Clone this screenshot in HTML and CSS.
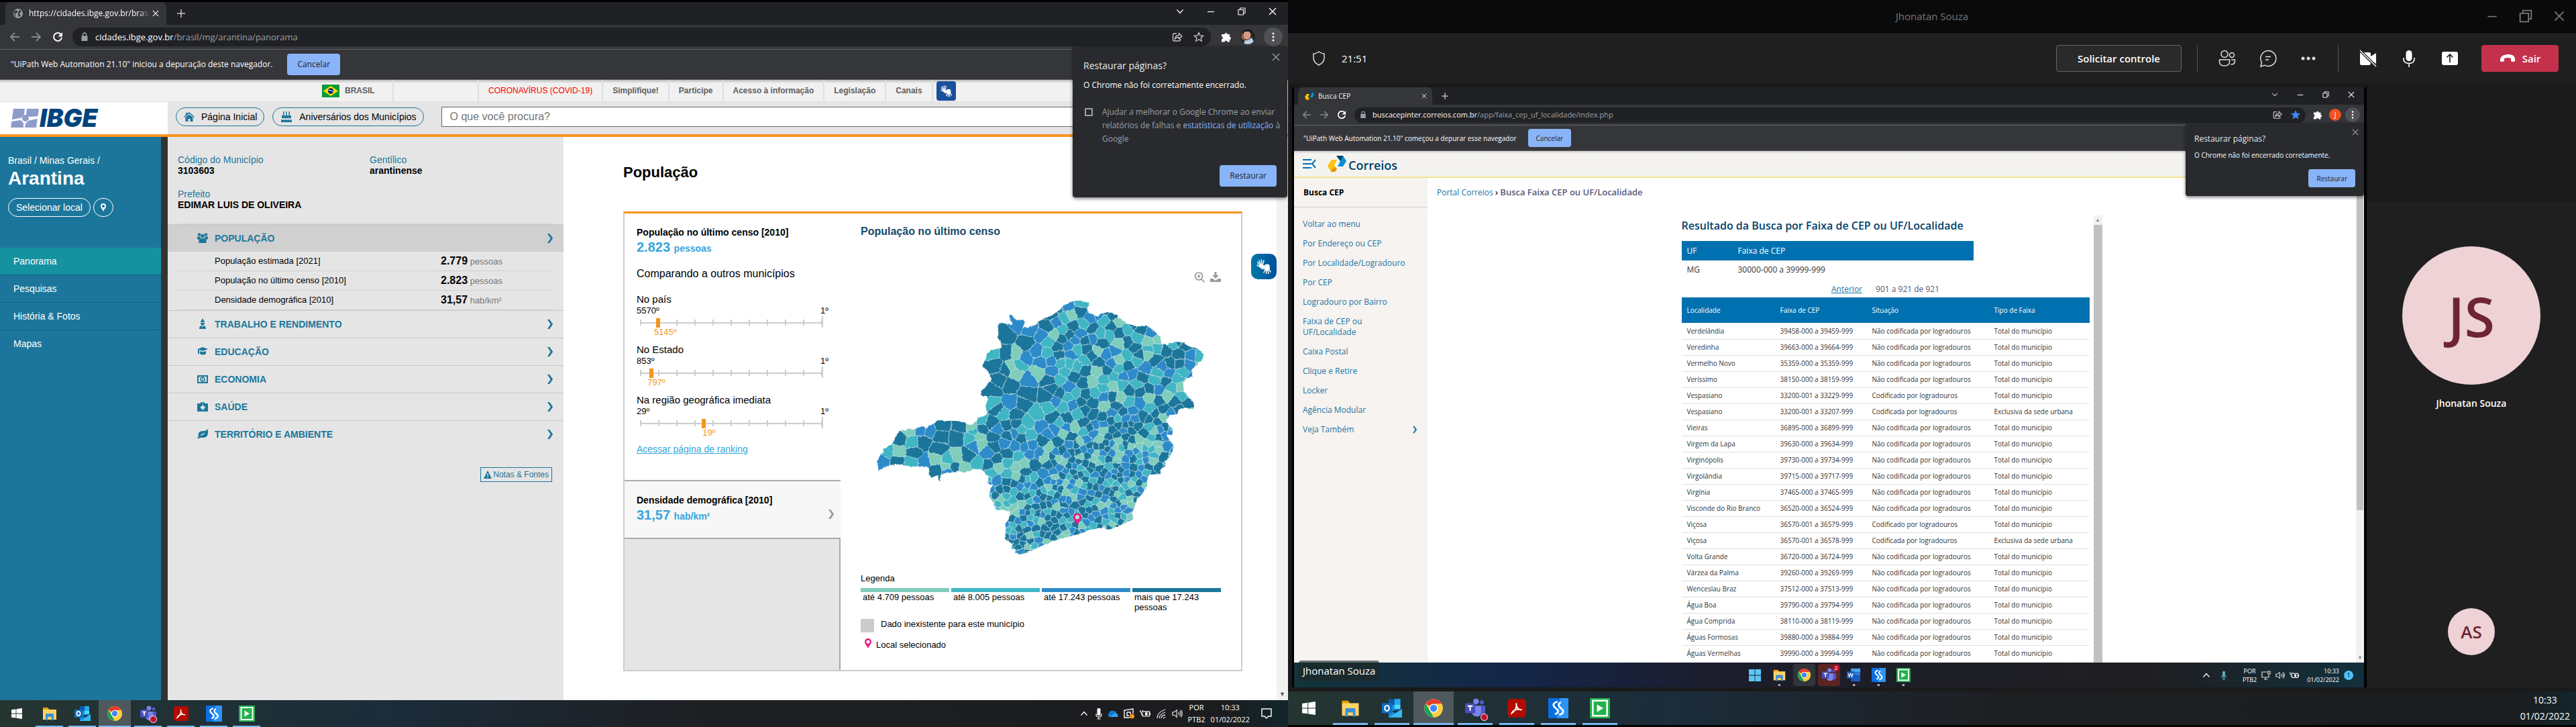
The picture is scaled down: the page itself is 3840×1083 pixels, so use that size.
FILE: index.html
```html
<!DOCTYPE html>
<html lang="pt-BR">
<head>
<meta charset="utf-8">
<title>Panorama - Arantina</title>
<link rel="stylesheet" href="styles.css">
</head>
<body>
<svg class="defs" aria-hidden="true">
  <symbol id="win" viewBox="0 0 16 16"><path fill="currentColor" d="M0 2.3 6.6 1.4V7.6H0zM7.4 1.3 16 0V7.6H7.4zM0 8.4H6.6V14.6L0 13.7zM7.4 8.4H16V16L7.4 14.7z"/></symbol>
  <symbol id="win11" viewBox="0 0 16 16"><path fill="#5cc8f5" d="M0 0H7.6V7.6H0zM8.4 0H16V7.6H8.4zM0 8.4H7.6V16H0zM8.4 8.4H16V16H8.4z"/></symbol>
  <symbol id="folder" viewBox="0 0 24 24"><path fill="#e8a000" d="M2 3h7l2 2v4H2z"/><path fill="#ffd466" d="M2 6h20v15H2z"/><path fill="#3a8fd8" d="M6 13q0-1 1-1h10q1 0 1 1v9h-3v-5H9v5H6z"/></symbol>
  <symbol id="outlook" viewBox="0 0 24 24"><path fill="#0a5aa8" d="M8 1h14v14H8z"/><path fill="#28a8ea" d="M15 1h7v7h-7z"/><path fill="#1490df" d="M8 8h7v7H8z"/><path fill="#50d9ff" d="M15 8h7v5h-7z"/><path fill="#1a86d8" d="M8 13l8 5 8-5v10H8z"/><path fill="#35b8f1" d="M8 23l16-10v10z"/><rect x="0" y="6" width="12" height="12" rx="1" fill="#0f6cbd"/><ellipse cx="6" cy="12" rx="2.6" ry="3.2" fill="none" stroke="#fff" stroke-width="1.7"/></symbol>
  <symbol id="chrome" viewBox="0 0 24 24"><circle cx="12" cy="12" r="11" fill="#ffcd40"/><path fill="#e33b2e" d="M12 12 2.5 6.500A11 11 0 0 1 21.500 6.500L12 7z"/><path fill="#1aa260" d="M2.500 6.500 7.600 15 12 23A11 11 0 0 1 2.500 6.500z"/><path fill="#ffcd40" d="M12 7h9.700A11 11 0 0 1 12 23l4.500-8z"/><circle cx="12" cy="12" r="5.300" fill="#fff"/><circle cx="12" cy="12" r="4.200" fill="#4285f4"/></symbol>
  <symbol id="teams" viewBox="0 0 24 24"><circle cx="13" cy="4" r="3.500" fill="#7b83eb"/><circle cx="20" cy="5" r="2.500" fill="#5059c9"/><path fill="#5059c9" d="M17 9h7v7q0 4-4 4h-3z"/><path fill="#7b83eb" d="M8 9h11v8q0 5-5 5t-6-5z"/><rect y="6" width="12" height="12" rx="1" fill="#464eb8"/><path d="M3 9.500h6M6 9.500V15" stroke="#fff" stroke-width="1.700"/></symbol>
  <symbol id="acrobat" viewBox="0 0 24 24"><rect x="1" y="1" width="22" height="22" rx="4" fill="#b30b00"/><path d="M6 18c1-3 6-6 12-4-4 0-7-3-6.500-8 1 5-2 10-5.500 12z" fill="none" stroke="#fff" stroke-width="1.500"/></symbol>
  <symbol id="sapp" viewBox="0 0 24 24"><path fill="#0a6ee0" d="M0 0h24v24H0z"/><path fill="#2b95f5" d="M14 0h10v24H10z"/><path d="M11 4C5 6 5 9 9 12s3 6-1 7M15 5c-3 1-4 4 0 7s4 6-2 8" fill="none" stroke="#fff" stroke-width="2.200"/></symbol>
  <symbol id="gapp" viewBox="0 0 24 24"><path fill="#22b14c" d="M0 0h24v24H0z"/><path d="M3.500 3h17v18h-17z" fill="none" stroke="#fff" stroke-width="2"/><path fill="#fff" d="M8.500 7.500 16 12l-7.500 4.500z"/></symbol>
  <symbol id="word" viewBox="0 0 24 24"><path fill="#41a5ee" d="M7 1h16v6H7z"/><path fill="#2b7cd3" d="M7 7h16v6H7z"/><path fill="#185abd" d="M7 13h16v10H7z"/><rect y="6" width="13" height="12" fill="#185abd"/><path d="M2.500 9l1.700 6L6.500 9.500 8.800 15l1.700-6" fill="none" stroke="#fff" stroke-width="1.400"/></symbol>
  <symbol id="close" viewBox="0 0 12 12"><path d="M1 1l10 10M11 1 1 11" fill="none" stroke="currentColor" stroke-width="1.300"/></symbol>
  <symbol id="minus" viewBox="0 0 12 12"><path d="M1 6.500h10" stroke="currentColor" stroke-width="1.200"/></symbol>
  <symbol id="restore" viewBox="0 0 12 12"><path d="M1 3.500h7.500V11H1zM3.500 3.500V1H11v7.500H8.500" fill="none" stroke="currentColor" stroke-width="1.100"/></symbol>
  <symbol id="down" viewBox="0 0 12 12"><path d="M1.500 3.500 6 8.500l4.500-5" fill="none" stroke="currentColor" stroke-width="1.200"/></symbol>
  <symbol id="up" viewBox="0 0 12 12"><path d="M1.500 8.500 6 3.500l4.500 5" fill="none" stroke="currentColor" stroke-width="1.300"/></symbol>
  <symbol id="plus" viewBox="0 0 12 12"><path d="M6 0v12M0 6h12" stroke="currentColor" stroke-width="1.500"/></symbol>
  <symbol id="back" viewBox="0 0 16 16"><path d="M15 8H2M8 2 2 8l6 6" fill="none" stroke="currentColor" stroke-width="1.800"/></symbol>
  <symbol id="fwd" viewBox="0 0 16 16"><path d="M1 8h13M8 2l6 6-6 6" fill="none" stroke="currentColor" stroke-width="1.800"/></symbol>
  <symbol id="reload" viewBox="0 0 16 16"><path d="M13 4.500A6 6 0 1 0 14 9" fill="none" stroke="currentColor" stroke-width="2"/><path fill="currentColor" d="M15 1v6.500H8.500z"/></symbol>
  <symbol id="lock" viewBox="0 0 12 14"><path fill="currentColor" d="M1.500 5.500h9V13h-9z"/><path d="M3.500 6V3.500a2.500 2.500 0 0 1 5 0V6" fill="none" stroke="currentColor" stroke-width="1.400"/></symbol>
  <symbol id="export" viewBox="0 0 16 16"><path d="M7 3H3q-1.500 0-1.500 1.500v8Q1.500 14 3 14h8q1.500 0 1.500-1.500V11M4.500 11c.5-4 3-5.500 6-5.500V2.500L15 7l-4.500 4V8.500c-3 0-4.500.5-6 2.500z" fill="none" stroke="currentColor" stroke-width="1.300"/></symbol>
  <symbol id="star" viewBox="0 0 16 16"><path d="M8 1.500l1.900 4.400 4.800.4-3.600 3.200 1.100 4.700L8 11.700l-4.200 2.500 1.100-4.700L1.300 6.300l4.800-.4z" stroke="currentColor" stroke-width="1.300"/></symbol>
  <symbol id="puzzle" viewBox="0 0 16 16"><path fill="currentColor" d="M1 4h4.500a2 2 0 1 1 4 0H13v4a2 2 0 1 1 0 4v3.500H9.500a2 2 0 1 0-4 0H1V11.500a2 2 0 1 0 0-4z"/></symbol>
  <symbol id="dots" viewBox="0 0 16 16"><g fill="#fff"><circle cx="8" cy="3" r="1.500"/><circle cx="8" cy="8" r="1.500"/><circle cx="8" cy="13" r="1.500"/></g></symbol>
  <symbol id="globe" viewBox="0 0 16 16"><circle cx="8" cy="8" r="7" fill="#9aa0a6"/><path fill="#35363a" d="M3 4c3-1 5 0 4 2s-1 1-3 2 1 3 1 5C3 12 1.500 9 2 6zM9 3c3 0 4 2 4 3-2 0-3 1-3 3l2 1c-1 2-2 3-4 3 1-3-1-4 0-6s2-2 1-4z"/></symbol>
  <symbol id="chev" viewBox="0 0 12 16"><path d="M2 1h3.200l5 7-5 7H2l4.700-7z" fill="currentColor"/></symbol>
  <symbol id="pin" viewBox="0 0 12 18"><path fill="currentColor" fill-rule="evenodd" d="M6 0a6 6 0 0 1 6 6c0 3.500-3.500 6.500-6 12C3.500 12.500 0 9.500 0 6a6 6 0 0 1 6-6zm0 3a3 3 0 1 0 0 6.200A3 3 0 0 0 6 3z"/></symbol>
  <symbol id="hands" viewBox="0 0 24 24"><g stroke="currentColor" stroke-width="1.500" stroke-linecap="round" fill="none"><path d="M6 10 2.500 5.500M7 9 5 3M8.500 9 8.500 2M10 10l2-7M6 12.500 2 10"/><path d="M14 17l-2 4M16 18l-.500 4.500M18 18l1 4.500M19.500 16l2.500 4M13 14l-3 2"/></g><path fill="currentColor" d="M5.500 9.500 10.500 9l2 2-1 4-3 .500q-3-2-3-6zM12 13q0-4 4-4.500l4 .500q1.500 4 .500 8l-5 2-3-3z"/></symbol>
  <symbol id="speaker" viewBox="0 0 18 16"><path d="M1 5.500h3L8 2v12l-4-3.500H1zM11 5.500q2 2.500 0 5M13 3.500q4 4.500 0 9M15.200 2q4 6 0 12" fill="none" stroke="currentColor" stroke-width="1.200"/></symbol>
  <symbol id="tmic" viewBox="0 0 10 18"><rect x="2.500" y="1" width="5" height="11" rx="2" fill="currentColor"/><path d="M1 9v2q0 3 4 3t4-3V9M5 14v3M2.500 17h5" fill="none" stroke="currentColor" stroke-width="1.200"/></symbol>
  <symbol id="battery" viewBox="0 0 18 14"><path d="M6 3.500h10v8H5V7M16 6h1.500v3H16M1 1v3.500h4V1M3 4.500V10" fill="none" stroke="currentColor" stroke-width="1.300"/><path fill="currentColor" d="M9 5h4v5H9z"/></symbol>
  <symbol id="correios" viewBox="0 0 28 24"><path fill="#ffc20e" d="M6 6h8l-4 8 4 6-3 4H5L0 15z"/><path fill="#d99a00" d="M5 24 9 17l5 2-3 5z"/><path fill="#0091d0" d="M15 0h8l5 8-5 8h-8l4-8z"/><path fill="#00416b" d="M13 0h10l-4 8z"/></symbol>
</svg>

<div class="desktop">
<!-- Monitor 1: navegador com o portal IBGE Cidades -->
<section class="screen screen-a">
  <div class="browser">
    <div class="tabs">
      <div class="tab"><svg class="i16"><use href="#globe"/></svg><span class="tab-title">https://cidades.ibge.gov.br/brasil</span><svg class="i10"><use href="#close"/></svg></div>
      <button class="icon-btn new-tab" aria-label="Nova guia"><svg class="i12"><use href="#plus"/></svg></button>
      <div class="win-ctl"><svg class="i12"><use href="#down"/></svg><svg class="i12"><use href="#minus"/></svg><svg class="i12"><use href="#restore"/></svg><svg class="i12"><use href="#close"/></svg></div>
    </div>
    <div class="toolbar">
      <div class="nav-ico"><svg class="i16 dim"><use href="#back"/></svg><svg class="i16 dim"><use href="#fwd"/></svg><svg class="i16"><use href="#reload"/></svg></div>
      <div class="omnibox"><svg class="lock"><use href="#lock"/></svg><span class="url"><b>cidades.ibge.gov.br</b>/brasil/mg/arantina/panorama</span><svg class="i16"><use href="#export"/></svg><svg class="i16 hollow"><use href="#star"/></svg></div>
      <svg class="i16 puzzle"><use href="#puzzle"/></svg>
      <svg class="avatar" viewBox="0 0 22 22"><defs><clipPath id="av"><circle cx="11" cy="11" r="11"/></clipPath></defs><g clip-path="url(#av)"><path fill="#222" d="M0 0h22v22H0z"/><path fill="#8a5a48" d="M2 5l5 3v9l-6-4z"/><ellipse cx="10" cy="8" rx="5.500" ry="7" fill="#d49b82"/><path fill="#1b1512" d="M3 0h14l-1 6-3-3H6L4 8z"/><path fill="#b9cfe0" d="M5 22q1-8 6-6l6-4 5 10z"/></g></svg>
      <span class="more"><svg class="i16"><use href="#dots"/></svg></span>
    </div>
    <div class="infobar"><span>"UiPath Web Automation 21.10" iniciou a depuração deste navegador.</span><button class="blue-btn">Cancelar</button></div>
  </div>

  <div class="ibge">
    <div class="govbar">
      <a class="gov-brasil" href="#"><svg class="flag" viewBox="0 0 26 19"><path fill="#009b3a" d="M0 0h26v19H0z"/><path fill="#fedf00" d="M13 2l11 7.500L13 17 2 9.500z"/><circle cx="13" cy="9.500" r="4.200" fill="#002776"/><path d="M9.500 8.500q4-1 7 2" stroke="#fff" fill="none"/></svg>BRASIL</a>
      <span class="gov-gap"></span>
      <a class="gov-red" href="#">CORONAVÍRUS (COVID-19)</a><a href="#">Simplifique!</a><a href="#">Participe</a><a href="#">Acesso à informação</a><a href="#">Legislação</a><a href="#">Canais</a>
      <span class="vl-small"><svg><use href="#hands"/></svg></span>
    </div>
    <header class="ibge-head">
      <div class="logo-box"><svg class="ibge-mark" viewBox="0 0 42 28"><path fill="#8e9cc9" d="M4 0h38l-4 28H0z"/><path fill="#fff" d="M24 0l-1 8q1 3 6 4l12-1-1 4-11 2q-6 2-7 6l-1 5h-2v-6q-1-4-5-5L1 19l1-3 12-2q5-2 6-6l1-8z"/><circle cx="22" cy="14" r="5" fill="#8e9cc9"/></svg><span class="ibge-word">IBGE</span></div>
      <div class="head-tools">
        <a class="pill" href="#"><svg class="i16"><path fill="currentColor" d="M8 1l8 7-1 1-7-6-7 6-1-1 3-3V2h2v1zM2.500 9L8 4.500 13.500 9v6h-4v-4h-3v4h-4z"/></svg>Página Inicial</a>
        <a class="pill" href="#"><svg class="cake" viewBox="0 0 18 16"><path fill="currentColor" d="M4 0h1.500v6H4zM8.200 0h1.500v6H8.200zM12.500 0H14v6h-1.500zM2 6h14v3.500q-2 2-3.500 0-1.700 2-3.500 0-1.700 2-3.500 0-1.500 2-3.500 0zM1 12q1.500 1 3 0 2 1.500 4 0 2 1.500 4 0 2 1.500 5 0v4H1z"/></svg>Aniversários dos Municípios</a>
        <input class="search" type="text" placeholder="O que você procura?" aria-label="Busca">
      </div>
    </header>
    <div class="ibge-body">
      <aside class="side">
        <p class="crumb">Brasil / Minas Gerais /</p>
        <h1>Arantina</h1>
        <div class="place-btns"><button>Selecionar local</button><button class="round" aria-label="Localização"><svg viewBox="0 0 12 18"><use href="#pin"/></svg></button></div>
        <nav><a class="on" href="#">Panorama</a><a href="#">Pesquisas</a><a href="#">História &amp; Fotos</a><a href="#">Mapas</a></nav>
      </aside>
      <section class="facts">
        <dl class="ids">
          <div><dt>Código do Município</dt><dd>3103603</dd></div><div><dt>Gentílico</dt><dd>arantinense</dd></div>
          <div><dt>Prefeito</dt><dd>EDIMAR LUIS DE OLIVEIRA</dd></div>
        </dl>
        <button class="theme open"><svg class="i16"><g fill="currentColor"><circle cx="3" cy="2.500" r="2.200"/><circle cx="13" cy="2.500" r="2.200"/><circle cx="8" cy="4.500" r="2.800"/><path d="M0 5.500h4.500L5 8 2 9.500H0zM16 5.500h-4.500L11 8l3 1.500h2zM2.500 9q5.500-2 11 0v6h-11z"/></g></svg><span>POPULAÇÃO</span><svg class="chev"><use href="#chev"/></svg></button>
        <ul class="vals">
          <li><span>População estimada [2021]</span><span><b>2.779</b> pessoas</span></li>
          <li><span>População no último censo [2010]</span><span><b>2.823</b> pessoas</span></li>
          <li><span>Densidade demográfica [2010]</span><span><b>31,57</b> hab/km²</span></li>
        </ul>
        <button class="theme"><svg class="i16"><path fill="currentColor" d="M7 0h2v2q2 0 2 3H5q0-3 2-3zM5 6h6q0 3-3 4-3-1-3-4zM3 15q0-4 3-5l2 2 2-2q3 1 3 5z"/></svg><span>TRABALHO E RENDIMENTO</span><svg class="chev"><use href="#chev"/></svg></button>
        <button class="theme"><svg class="i16"><path fill="currentColor" d="M8 1l8 3-8 3-5-2v6H1V4zM4 7l4 1.500L13 7v4q-5 3-9 0z"/></svg><span>EDUCAÇÃO</span><svg class="chev"><use href="#chev"/></svg></button>
        <button class="theme"><svg class="i16"><path d="M1 3h14v10H1z" fill="none" stroke="currentColor" stroke-width="2"/><circle cx="8" cy="8" r="3" fill="none" stroke="currentColor" stroke-width="1.500"/><path d="M8 6v4M2 4h2M12 12h2" stroke="currentColor"/></svg><span>ECONOMIA</span><svg class="chev"><use href="#chev"/></svg></button>
        <button class="theme"><svg class="i16"><path fill="currentColor" fill-rule="evenodd" d="M5 3V1h6v2h5v12H0V3zm1.500 0h3v-.700h-3zM7 5.500v2H5v3h2v2h2.500v-2h2v-3h-2v-2z"/></svg><span>SAÚDE</span><svg class="chev"><use href="#chev"/></svg></button>
        <button class="theme"><svg class="i16"><path fill="currentColor" fill-rule="evenodd" d="M16 0v5q0 8-7 8H4l-3 1.500L0 14l2-3Q0 3 9 3q5 0 7-3zM4 10q5-1 8-4-4 0-8 4z"/></svg><span>TERRITÓRIO E AMBIENTE</span><svg class="chev"><use href="#chev"/></svg></button>
        <button class="notes"><svg class="i12" viewBox="0 0 12 12"><path fill="currentColor" fill-rule="evenodd" d="M6 0l6 12H0zM5.300 4v4h1.400V4zm0 5v1.500h1.400V9z"/></svg>Notas &amp; Fontes</button>
      </section>
      <main class="pop">
        <h2>População</h2>
        <div class="card">
          <div class="card-l">
            <section class="stat">
              <h3>População no último censo [2010]</h3>
              <p class="big">2.823 <small>pessoas</small></p>
              <h4>Comparando a outros municípios</h4>
              <div class="rank"><p>No país</p><div class="ends"><span>5570º</span><span>1º</span></div><div class="track"><i class="mark" style="left:9%"></i></div><div class="pos"><span style="left:12%">5145º</span></div></div>
              <div class="rank"><p>No Estado</p><div class="ends"><span>853º</span><span>1º</span></div><div class="track"><i class="mark" style="left:5%"></i></div><div class="pos"><span style="left:8%">797º</span></div></div>
              <div class="rank"><p>Na região geográfica imediata</p><div class="ends"><span>29º</span><span>1º</span></div><div class="track"><i class="mark" style="left:34%"></i></div><div class="pos"><span style="left:36%">19º</span></div></div>
              <a class="ranking" href="#">Acessar página de ranking</a>
            </section>
            <section class="stat alt">
              <div><h3>Densidade demográfica [2010]</h3><p class="big">31,57 <small>hab/km²</small></p></div>
              <svg class="chev"><use href="#chev"/></svg>
            </section>
            <div class="filler"></div>
          </div>
          <div class="card-r">
            <h3>População no último censo</h3>
            <div class="map-tools"><svg class="i16"><path d="M7 1a5.500 5.500 0 1 0 .1 0M11 11l4.500 4.500M7 4v5M4.500 6.500h5" fill="none" stroke="currentColor" stroke-width="1.700"/></svg><svg class="i16"><path fill="currentColor" d="M6.500 0h3v5H13l-5 5-5-5h3.500zM0 10h4l4 3 4-3h4v5H0z"/></svg></div>
            <svg class="map" viewBox="8 3 1560 1287" preserveAspectRatio="none" role="img" aria-label="Mapa de Minas Gerais">
              <defs>
                <filter id="rough" x="0" y="0" width="1" height="1"><feTurbulence type="fractalNoise" baseFrequency=".09" numOctaves="2" seed="4"/><feDisplacementMap in="SourceGraphic" scale="10" xChannelSelector="R" yChannelSelector="G"/></filter>
                <clipPath id="mg"><path d="M80 800 95 768 108 765 105 745 125 735 145 725 160 690 178 665 205 662 215 655 235 660 250 655 275 645 290 655 310 640 330 630 350 616 370 622 400 620 430 622 465 632 480 640 510 625 515 608 540 600 555 590 552 570 548 550 560 525 555 510 530 508 527 490 545 475 560 455 575 435 565 410 555 393 535 378 545 350 555 320 575 305 605 298 618 290 612 265 600 250 605 225 602 190 620 183 650 190 665 192 655 165 650 148 662 148 675 165 695 175 710 168 720 180 710 205 735 203 765 192 775 178 805 162 835 150 865 128 885 108 910 92 940 83 970 86 998 94 988 125 1000 140 1035 155 1045 143 1075 136 1110 145 1135 165 1160 185 1200 198 1250 198 1275 215 1305 245 1310 275 1335 280 1365 268 1400 270 1430 288 1465 298 1495 322 1485 350 1460 375 1440 392 1445 425 1420 430 1405 450 1407 490 1425 510 1450 540 1452 558 1445 570 1415 562 1385 570 1378 592 1345 595 1330 620 1345 640 1360 660 1358 682 1330 685 1345 705 1360 725 1360 755 1345 780 1330 800 1325 825 1310 835 1305 860 1258 860 1250 880 1248 915 1230 945 1205 970 1195 1000 1185 1030 1188 1060 1150 1080 1085 1108 1060 1098 1000 1108 950 1128 900 1140 840 1160 790 1180 750 1200 705 1217 675 1213 680 1195 660 1190 665 1170 632 1150 635 1120 635 1075 650 1060 655 1030 625 1018 595 1020 580 985 565 955 570 925 580 910 558 900 560 870 540 845 520 835 500 835 480 845 460 852 430 845 400 852 370 855 355 860 353 890 345 888 343 862 315 875 303 855 305 830 270 825 230 825 195 820 170 815 130 820 85 843z"/></clipPath>
              </defs>
              <g filter="url(#rough)"><g id="cells" clip-path="url(#mg)"></g></g>
              <svg x="928" y="1033" width="36" height="54" viewBox="0 0 12 18" class="pink"><circle cx="6" cy="6" r="3.500" fill="#b5dcec"/><use href="#pin"/></svg>
            </svg>
            <div class="legend">
              <p>Legenda</p>
              <ul class="ramp"><li class="c0">até 4.709 pessoas</li><li class="c1">até 8.005 pessoas</li><li class="c2">até 17.243 pessoas</li><li class="c3">mais que 17.243 pessoas</li></ul>
              <p class="nodata"><i></i>Dado inexistente para este município</p>
              <p class="sel"><svg class="pink"><use href="#pin"/></svg>Local selecionado</p>
            </div>
          </div>
        </div>
        <button class="vl-float" aria-label="Libras"><svg><use href="#hands"/></svg></button>
      </main>
      <div class="vscroll"><span>▼</span></div>
    </div>
  </div>

  <footer class="task">
    <span class="tk nolink"><svg class="wi"><use href="#win"/></svg></span><span class="tk"><svg><use href="#folder"/></svg></span><span class="tk"><svg><use href="#outlook"/></svg></span><span class="tk active"><svg><use href="#chrome"/></svg></span><span class="tk rec"><svg><use href="#teams"/></svg></span><span class="tk"><svg><use href="#acrobat"/></svg></span><span class="tk"><svg><use href="#sapp"/></svg></span><span class="tk"><svg><use href="#gapp"/></svg></span>
    <div class="tray">
      <svg class="i12"><use href="#up"/></svg><svg class="mic"><use href="#tmic"/></svg>
      <svg class="i16"><path fill="#0f78d4" d="M2 13q-3-3 0-5 1-5 6-4 4-1 5 4 4 1 2 5z"/><path fill="#32a5ee" d="M3 13l8-6q5 0 4 6z"/></svg>
      <svg class="i16"><path d="M9 14H1V3l13-2v7M5 6v5h3M5 6h5v3" fill="none" stroke="#fff" stroke-width="1.400"/><circle cx="12.500" cy="12" r="3.500" fill="#f7941d"/></svg>
      <svg class="i16"><use href="#battery"/></svg>
      <svg class="i16"><path d="M2 15Q2 6 14 2M5 15q0-6 9-9M8 15q0-4 6-5M11 15l3-2" fill="none" stroke="#ddd" stroke-width="1.300"/></svg>
      <svg class="i16"><use href="#speaker"/></svg>
      <span class="two">POR<br>PTB2</span><span class="two date">10:33<br>01/02/2022</span>
      <svg class="i16 act"><path d="M1 1h14v11h-4l-3 3-3-3H1z" fill="none" stroke="#fff" stroke-width="1.400"/></svg>
    </div>
  </footer>

  <div class="restore-pop pop-a" role="dialog" aria-label="Restaurar páginas?">
    <button class="icon-btn x" aria-label="Fechar"><svg class="i12"><use href="#close"/></svg></button>
    <h5>Restaurar páginas?</h5>
    <p>O Chrome não foi corretamente encerrado.</p>
    <label><input type="checkbox"><span>Ajudar a melhorar o Google Chrome ao enviar relatórios de falhas e <a href="#">estatísticas de utilização</a> à Google</span></label>
    <button class="blue-btn">Restaurar</button>
  </div>
</section>

<!-- Monitor 2: chamada do Teams com tela compartilhada -->
<section class="screen screen-b">
  <div class="t-title"><span>Jhonatan Souza</span><div><svg class="i16"><use href="#minus"/></svg><svg class="i20"><use href="#restore"/></svg><svg class="i16"><use href="#close"/></svg></div></div>
  <div class="t-bar">
    <svg class="i24 thin"><path d="M12 2q4 3 8 3v6q0 7-8 11-8-4-8-11V5q4 0 8-3z"/></svg><span class="time">21:51</span>
    <button class="ask">Solicitar controle</button><i class="sep"></i>
    <div class="t-icons g1">
      <svg class="i26 thin"><circle cx="9" cy="6.500" r="5"/><circle cx="20" cy="8" r="3.500"/><path d="M1.500 15h15v3q0 6-7.500 6t-7.500-6zM19 15h5.500v2q0 5-6 5"/></svg>
      <svg class="i26 thin"><path d="M2 25l1.500-6a11.500 11.500 0 1 1 4.500 4.200zM9 10.500h8M9 15h5"/></svg>
      <svg class="i26"><g fill="#ddd"><circle cx="4" cy="13" r="2.500"/><circle cx="12" cy="13" r="2.500"/><circle cx="20" cy="13" r="2.500"/></g></svg>
    </div><i class="sep"></i>
    <div class="t-icons g2">
      <svg class="i26"><path fill="#fff" d="M1 6q0-2 2-2h12q2 0 2 2v4l8-5v16l-8-5v4q0 3-3 3H3q-2 0-2-2z"/><path d="M1 1l24 24" stroke="#1f1f1f" stroke-width="4"/><path d="M1 1l24 24" stroke="#fff" stroke-width="1.400"/></svg>
      <svg class="i26"><rect x="8.500" y="1" width="9" height="16" rx="4.500" fill="#fff"/><path d="M5 12v2q0 6.500 8 6.500t8-6.500v-2M13 20.500V26" fill="none" stroke="#fff" stroke-width="1.600"/></svg>
      <svg class="i26"><rect x="1" y="3" width="24" height="20" rx="3" fill="#fff"/><path d="M13 19V7M8.500 11.500 13 7l4.500 4.500" fill="none" stroke="#1f1f1f" stroke-width="1.700"/></svg>
    </div>
    <button class="leave"><svg class="i24"><path fill="#fff" d="M1 16Q0 7 12 6t11 10q-1 2-6 0v-4q-5-2-10 0v4q-5 2-6 0z"/></svg>Sair</button>
  </div>

  <div class="stage">
    <div class="shared">
      <div class="browser mini">
        <div class="tabs">
          <div class="tab"><svg class="i14"><use href="#correios"/></svg><span class="tab-title">Busca CEP</span><svg class="i8"><use href="#close"/></svg></div>
          <button class="icon-btn new-tab" aria-label="Nova guia"><svg class="i10"><use href="#plus"/></svg></button>
          <div class="win-ctl"><svg class="i10"><use href="#down"/></svg><svg class="i10"><use href="#minus"/></svg><svg class="i10"><use href="#restore"/></svg><svg class="i10"><use href="#close"/></svg></div>
        </div>
        <div class="toolbar">
          <div class="nav-ico"><svg class="i14 dim"><use href="#back"/></svg><svg class="i14 dim"><use href="#fwd"/></svg><svg class="i14"><use href="#reload"/></svg></div>
          <div class="omnibox"><svg class="lock"><use href="#lock"/></svg><span class="url"><b>buscacepinter.correios.com.br</b>/app/faixa_cep_uf_localidade/index.php</span><svg class="i14"><use href="#export"/></svg><svg class="i14 starred"><use href="#star"/></svg></div>
          <svg class="i14 puzzle"><use href="#puzzle"/></svg><span class="initial">J</span><span class="more"><svg class="i14"><use href="#dots"/></svg></span>
        </div>
        <div class="infobar"><span>"UiPath Web Automation 21.10" começou a depurar esse navegador</span><button class="blue-btn">Cancelar</button></div>
      </div>
      <header class="cor-head"><svg class="i20 burger"><path d="M0 4h13M0 10h13M0 16h13M19 4l-5 6 5 6" fill="none" stroke="#0071ad" stroke-width="2"/></svg><svg class="cor-mark"><use href="#correios"/></svg><span>Correios</span></header>
      <div class="cor-body">
        <aside class="cor-side"><h6>Busca CEP</h6>
          <nav><a href="#">Voltar ao menu</a><a href="#">Por Endereço ou CEP</a><a href="#">Por Localidade/Logradouro</a><a href="#">Por CEP</a><a href="#">Logradouro por Bairro</a><a href="#">Faixa de CEP ou<br>UF/Localidade</a><a href="#">Caixa Postal</a><a href="#">Clique e Retire</a><a href="#">Locker</a><a href="#">Agência Modular</a><a class="more-link" href="#">Veja Também<svg class="i12"><use href="#chev"/></svg></a></nav>
        </aside>
        <main class="cor-main">
          <p class="trail"><a href="#">Portal Correios</a> <b class="gt">›</b> <b>Busca Faixa CEP ou UF/Localidade</b></p>
          <div class="frame">
            <div class="result">
              <h3>Resultado da Busca por Faixa de CEP ou UF/Localidade</h3>
              <table class="uf"><thead><tr><th>UF</th><th>Faixa de CEP</th></tr></thead><tbody><tr><td>MG</td><td>30000-000 a 39999-999</td></tr></tbody></table>
              <p class="pager"><a href="#">Anterior</a><span>901 a 921 de 921</span></p>
              <table class="list">
                <thead><tr><th>Localidade</th><th>Faixa de CEP</th><th>Situação</th><th>Tipo de Faixa</th></tr></thead>
                <tbody>
                <tr><td>Verdelândia</td><td>39458-000 a 39459-999</td><td>Não codificada por logradouros</td><td>Total do município</td></tr>
                <tr><td>Veredinha</td><td>39663-000 a 39664-999</td><td>Não codificada por logradouros</td><td>Total do município</td></tr>
                <tr><td>Vermelho Novo</td><td>35359-000 a 35359-999</td><td>Não codificada por logradouros</td><td>Total do município</td></tr>
                <tr><td>Veríssimo</td><td>38150-000 a 38159-999</td><td>Não codificada por logradouros</td><td>Total do município</td></tr>
                <tr><td>Vespasiano</td><td>33200-001 a 33229-999</td><td>Codificado por logradouros</td><td>Total do município</td></tr>
                <tr><td>Vespasiano</td><td>33200-001 a 33207-999</td><td>Codificada por logradouros</td><td>Exclusiva da sede urbana</td></tr>
                <tr><td>Vieiras</td><td>36895-000 a 36899-999</td><td>Não codificada por logradouros</td><td>Total do município</td></tr>
                <tr><td>Virgem da Lapa</td><td>39630-000 a 39634-999</td><td>Não codificada por logradouros</td><td>Total do município</td></tr>
                <tr><td>Virginópolis</td><td>39730-000 a 39734-999</td><td>Não codificada por logradouros</td><td>Total do município</td></tr>
                <tr><td>Virgolândia</td><td>39715-000 a 39717-999</td><td>Não codificada por logradouros</td><td>Total do município</td></tr>
                <tr><td>Virgínia</td><td>37465-000 a 37465-999</td><td>Não codificada por logradouros</td><td>Total do município</td></tr>
                <tr><td>Visconde do Rio Branco</td><td>36520-000 a 36524-999</td><td>Não codificada por logradouros</td><td>Total do município</td></tr>
                <tr><td>Viçosa</td><td>36570-001 a 36579-999</td><td>Codificado por logradouros</td><td>Total do município</td></tr>
                <tr><td>Viçosa</td><td>36570-001 a 36578-999</td><td>Codificada por logradouros</td><td>Exclusiva da sede urbana</td></tr>
                <tr><td>Volta Grande</td><td>36720-000 a 36724-999</td><td>Não codificada por logradouros</td><td>Total do município</td></tr>
                <tr><td>Várzea da Palma</td><td>39260-000 a 39269-999</td><td>Não codificada por logradouros</td><td>Total do município</td></tr>
                <tr><td>Wenceslau Braz</td><td>37512-000 a 37513-999</td><td>Não codificada por logradouros</td><td>Total do município</td></tr>
                <tr><td>Água Boa</td><td>39790-000 a 39794-999</td><td>Não codificada por logradouros</td><td>Total do município</td></tr>
                <tr><td>Água Comprida</td><td>38110-000 a 38119-999</td><td>Não codificada por logradouros</td><td>Total do município</td></tr>
                <tr><td>Águas Formosas</td><td>39880-000 a 39884-999</td><td>Não codificada por logradouros</td><td>Total do município</td></tr>
                <tr><td>Águas Vermelhas</td><td>39990-000 a 39994-999</td><td>Não codificada por logradouros</td><td>Total do município</td></tr>
                </tbody>
              </table>
            </div>
            <div class="bar inner"><span>▲</span><i></i></div>
          </div>
        </main>
        <div class="bar outer"><i></i><span>▼</span></div>
      </div>
      <footer class="task11">
        <div class="dock">
          <span class="plain"><svg><use href="#win11"/></svg></span><span><svg><use href="#folder"/></svg></span><span class="cur"><svg><use href="#chrome"/></svg></span><span class="alert"><svg><use href="#teams"/></svg><em>2</em></span><span><svg><use href="#word"/></svg></span><span><svg><use href="#sapp"/></svg></span><span><svg><use href="#gapp"/></svg></span>
        </div>
        <div class="tray11"><svg class="i12"><use href="#up"/></svg><svg class="mic"><use href="#tmic"/></svg><span class="two">POR<br>PTB2</span><svg class="i14"><path d="M9 2H1v8h10V6M4 13h5M6 10v3M10 1h3v4h-3z" fill="none" stroke="#ddd" stroke-width="1.200"/></svg><svg class="i14"><use href="#speaker"/></svg><svg class="i14"><use href="#battery"/></svg><span class="two date">10:33<br>01/02/2022</span><em>1</em></div>
      </footer>
      <span class="who">Jhonatan Souza</span>
      <div class="restore-pop pop-b" role="dialog" aria-label="Restaurar páginas?">
        <button class="icon-btn x" aria-label="Fechar"><svg class="i10"><use href="#close"/></svg></button>
        <h5>Restaurar páginas?</h5><p>O Chrome não foi encerrado corretamente.</p><button class="blue-btn">Restaurar</button>
      </div>
    </div>
    <aside class="people">
      <div class="person"><span class="face">JS</span><b>Jhonatan Souza</b></div>
      <span class="face me">AS</span>
    </aside>
  </div>

  <footer class="task big-task">
    <span class="tk nolink"><svg class="wi"><use href="#win"/></svg></span><span class="tk"><svg><use href="#folder"/></svg></span><span class="tk"><svg><use href="#outlook"/></svg></span><span class="tk active"><svg><use href="#chrome"/></svg></span><span class="tk rec"><svg><use href="#teams"/></svg></span><span class="tk"><svg><use href="#acrobat"/></svg></span><span class="tk"><svg><use href="#sapp"/></svg></span><span class="tk"><svg><use href="#gapp"/></svg></span>
    <div class="tray"><span class="two date">10:33<br>01/02/2022</span></div>
  </footer>
</section>
</div>
<script src="map.js"></script>
</body>
</html>
```
FILE: map.js
```js
// Draws the municipalities of Minas Gerais as cells around their seats.
// Each seat is x, y, population class (0 = smallest, 3 = largest).
const seats = [
  105,805,2, 128,760,1, 170,760,0, 165,800,3, 180,700,3, 218,662,0, 230,715,1, 240,765,3, 228,805,1,
  270,660,2, 305,665,2, 280,715,3, 285,805,2, 345,745,3, 355,690,3, 360,640,3, 330,795,0, 335,840,3,
  385,795,1, 425,780,0, 380,828,0, 415,830,3, 425,695,3, 440,645,3, 455,835,0, 470,775,3, 385,848,2,
  490,648,0, 498,668,1, 485,697,1, 520,690,0, 502,730,2, 525,725,0, 515,815,1, 530,615,1, 530,660,3,
  640,235,3, 685,190,2, 740,210,2, 725,275,3, 795,240,2, 820,200,3, 855,180,2, 905,110,2, 965,95,1,
  960,130,3, 918,148,0, 890,160,1, 1000,160,2, 1065,172,1, 1100,150,3, 1160,210,1, 1220,212,3,
  1270,225,2, 1205,250,1, 1165,270,3, 1255,270,0, 1255,300,1, 1250,322,0, 880,255,3, 930,200,3,
  1010,210,3, 1015,252,2, 1085,235,1, 1050,275,3, 980,262,3, 935,262,2, 860,290,3, 770,310,2,
  815,318,1, 680,322,0, 640,320,3, 578,320,1, 590,370,3, 640,390,3, 720,340,2, 790,360,2, 695,370,1,
  658,380,0, 680,408,0, 775,405,0, 735,435,2, 610,440,3, 580,485,3, 655,460,3, 730,500,3, 710,545,3,
  825,440,3, 815,510,3, 578,540,1, 655,540,2, 625,587,1, 600,570,3, 680,595,3, 575,630,3, 640,645,3,
  775,590,1, 740,685,1, 730,630,1, 790,645,2, 840,605,3, 900,610,3, 885,555,1, 870,500,3, 910,470,2,
  940,500,1, 1025,495,1, 1015,590,3, 980,395,3, 1040,360,3, 1095,365,2, 1110,310,2, 1060,435,1,
  1105,425,1, 985,300,3, 1160,330,1, 1205,355,1, 1215,325,3, 1330,305,3, 1385,325,3, 1350,365,3,
  1440,330,2, 1475,330,1, 1430,370,2, 1345,410,2, 1285,350,3, 1225,425,3, 1240,385,2, 1170,485,3,
  1220,490,3, 1300,530,3, 1370,535,3, 1425,540,3, 1350,590,2, 1260,480,3, 1355,470,1, 1397,470,0,
  1400,400,1, 950,590,1, 1065,555,0, 1115,555,3, 1185,575,2, 1235,675,3, 585,695,3, 560,760,2,
  560,820,3, 605,825,0, 645,860,1, 680,830,0, 645,770,3, 600,795,3, 680,735,2, 630,720,2, 860,720,3,
  800,710,3, 920,690,3, 850,660,2, 640,925,3, 595,890,2, 590,950,3, 1300,835,3, 1325,780,3, 1335,735,2,
  935,998,3, 1040,1062,3, 700,955,3, 780,900,3, 760,815,3, 720,850,3
];
const colors = ['#7fcdbb', '#41b6c4', '#2e8bca', '#1c769b'];
const points = [];
for (let i = 0; i < seats.length; i += 3) points.push([seats[i], seats[i + 1], seats[i + 2], 46]);

let state = 20221;
const next = () => (state = (state * 16807) % 2147483647) / 2147483647;

// Municipalities get smaller towards the south and the east.
function spacing(x, y) {
  if (x < 540 && y > 560) return 400;
  if (y > 880 || (y > 720 && x > 840)) return 21;
  if (y > 600) return x > 880 ? 24 : 32;
  if (x < 820) return 90;
  return 33;
}
for (let n = 0; n < 16000; n++) {
  const x = 530 + next() * 970, y = 80 + next() * 1150, r = spacing(x, y), c = next();
  if (points.every(p => Math.hypot(p[0] - x, p[1] - y) > (p[3] === 46 ? Math.max(r, y > 850 ? 28 : 36) : r))) {
    points.push([x, y, c < 0.16 ? 0 : c < 0.36 ? 1 : c < 0.62 ? 2 : 3, r]);
  }
}

// Keeps the part of a polygon that is closer to a than to b.
function cut(poly, a, b) {
  const mx = (a[0] + b[0]) / 2, my = (a[1] + b[1]) / 2, dx = b[0] - a[0], dy = b[1] - a[1];
  const side = p => (p[0] - mx) * dx + (p[1] - my) * dy;
  const out = [];
  for (let i = 0; i < poly.length; i++) {
    const p = poly[i], q = poly[(i + 1) % poly.length], s = side(p), t = side(q);
    if (s <= 0) out.push(p);
    if (s * t < 0) { const k = s / (s - t); out.push([p[0] + (q[0] - p[0]) * k, p[1] + (q[1] - p[1]) * k]); }
  }
  return out;
}
const cells = document.getElementById('cells');
for (const a of points) {
  let poly = [[0, 0], [1568, 0], [1568, 1290], [0, 1290]];
  for (const b of points) if (a !== b && Math.hypot(a[0] - b[0], a[1] - b[1]) < 500) poly = cut(poly, a, b);
  const el = document.createElementNS('http://www.w3.org/2000/svg', 'polygon');
  el.setAttribute('points', poly.map(p => Math.round(p[0]) + ',' + Math.round(p[1])).join(' '));
  el.setAttribute('fill', colors[a[2]]);
  cells.appendChild(el);
}
```
FILE: styles.css
```css
* { box-sizing: border-box; }
body, h1, h2, h3, h4, h5, h6, p, ul, dl, dd { margin: 0; padding: 0; }
ul { list-style: none; }
body { background: #000; font: 14px/18px "Liberation Sans", Arial, sans-serif; color: #000; }
button, input { font: inherit; margin: 0; }
button { padding: 0; border: 0; background: none; color: inherit; }
a { color: inherit; text-decoration: none; }
svg { display: block; flex: none; }
.defs { position: absolute; width: 0; height: 0; }
.i8 { width: 8px; height: 8px; }
.i10 { width: 10px; height: 10px; }
.i12 { width: 12px; height: 12px; }
.i14 { width: 14px; height: 14px; }
.i16 { width: 16px; height: 16px; }
.i20 { width: 20px; height: 20px; }
.i24 { width: 24px; height: 24px; }
.i26 { width: 26px; height: 26px; }

.desktop { display: grid; grid-template-columns: minmax(0, 1fr) minmax(0, 1fr); min-height: 100vh; }
.screen { position: relative; display: flex; flex-direction: column; }
.screen-a { padding-top: 3px; }

/* Chrome */
.browser, .restore-pop { font-family: "Open Sans", "Noto Sans", sans-serif; font-size: 12px; color: #fff; }
.tabs { display: flex; align-items: stretch; height: 34px; background: #202124; padding-left: 8px; }
.tab { display: flex; align-items: center; width: 240px; padding: 0 11px; background: #35363a; border-radius: 8px 8px 0 0; }
.tab-title { flex: 1; margin: 0 4px 0 8px; white-space: nowrap; overflow: hidden; -webkit-mask-image: linear-gradient(90deg, #000 92%, transparent); mask-image: linear-gradient(90deg, #000 92%, transparent); }
.icon-btn { display: flex; align-items: center; justify-content: center; color: #ccc; }
.new-tab { width: 44px; }
.win-ctl { display: flex; align-items: center; gap: 34px; margin-left: auto; padding: 0 17px 6px 0; }
.toolbar { display: flex; align-items: center; height: 37px; background: #35363a; border-bottom: 1px solid #5f6368; padding: 0 8px 0 14px; }
.nav-ico { display: flex; gap: 16px; width: 94px; }
.dim { color: #85878b; }
.omnibox { flex: 1; display: flex; align-items: center; gap: 16px; height: 28px; margin-right: 15px; padding: 0 10px 0 12px; background: #202124; border-radius: 14px; color: #c8c8c8; }
.lock { width: 12px; height: 14px; margin-right: -6px; color: #9aa0a6; }
.url { flex: 1; color: #9aa0a6; font-size: 13px; }
.url b { font-weight: 400; color: #fff; }
.hollow { fill: none; }
.puzzle { color: #fff; }
.avatar { width: 22px; height: 22px; margin: 0 7px 0 13px; }
.more { display: grid; place-items: center; width: 28px; height: 28px; margin-left: 6px; border-radius: 50%; background: #505154; }
.infobar { display: flex; align-items: center; gap: 22px; height: 45px; padding-left: 16px; background: #35363a; border-bottom: 1px solid #5a545c; white-space: nowrap; }
.blue-btn { height: 32px; padding: 0 15px; border-radius: 4px; background: #8ab4f8; color: #202124; font-size: 12px; }

/* Chrome: restore bubble */
.restore-pop { position: absolute; display: flex; flex-direction: column; background: #292a2d; border-radius: 4px; box-shadow: 0 2px 5px rgba(0,0,0,.5); }
.restore-pop .x { position: absolute; color: #9aa0a6; }
.restore-pop h5 { font-weight: 400; color: #e8eaed; }
.restore-pop .blue-btn { align-self: flex-end; }
.pop-a { top: 69px; right: 1px; width: 320px; height: 225px; padding: 18px 16px 16px; }
.pop-a .x { top: 10px; right: 11px; }
.pop-a h5 { font-size: 14px; line-height: 22px; }
.pop-a p { margin-top: 8px; line-height: 20px; }
.pop-a label { display: flex; gap: 14px; margin: 20px -10px auto 2px; line-height: 20px; color: #9aa0a6; }
.pop-a label a { color: #8ab4f8; }
.pop-a input { appearance: none; flex: none; width: 12px; height: 12px; margin-top: 4px; border: 2px solid #9aa0a6; border-radius: 1px; }

/* IBGE */
.ibge { flex: 1; display: flex; flex-direction: column; background: #fff; }
.govbar { display: flex; height: 33px; padding-left: 480px; background: linear-gradient(#bbb, #f1f1f1 5px); border-bottom: 1px solid #dfdfdf; font: bold 12px/32px "Liberation Sans", Arial, sans-serif; color: #606060; }
.govbar > a { padding: 0 14px; border-right: 2px solid #dfdfdf; white-space: nowrap; }
.govbar .gov-brasil { display: flex; align-items: center; gap: 8px; width: 107px; padding: 0; }
.gov-gap { width: 127px; border-right: 2px solid #dfdfdf; }
.govbar .gov-red { color: #f00; font-weight: 400; }
.flag { width: 26px; height: 19px; }
.vl-small { width: 29px; height: 29px; margin: 2px 0 0 5px; padding: 5px; border-radius: 4px; background: #1a4f9c; color: #fff; }
.vl-small svg { width: 19px; height: 19px; }
.ibge-head { display: flex; height: 52px; border-bottom: 4px solid #f7931e; }
.logo-box { display: flex; align-items: center; gap: 1px; width: 250px; padding: 0 0 0 16px; }
.ibge-mark { width: 42px; height: 28px; }
.ibge-word { font: italic 900 37px/28px Inter, "Liberation Sans", sans-serif; color: #00447c; }
.head-tools { flex: 1; display: flex; align-items: center; gap: 12px; padding: 0 14px 4px 12px; background: #e5e5e5; }
.pill { display: flex; align-items: center; gap: 10px; height: 28px; padding: 0 10px 0 11px; border: 1px solid #1c769b; border-radius: 14px; white-space: nowrap; }
.pill svg { color: #1c769b; }
.cake { width: 18px; height: 16px; }
.search { flex: 1; height: 30px; margin-left: 14px; padding: 0 12px; border: 1px solid #666; background: #fff; font-size: 16px; }
.search::placeholder { color: #757575; opacity: 1; }
.ibge-body { flex: 1; display: flex; }
.side { width: 250px; padding-top: 26px; background: #1c769b; border-right: 10px solid #333; color: #fff; }
.crumb, .side h1, .place-btns { padding-left: 12px; }
.side h1 { font-size: 28px; line-height: 36px; }
.place-btns { display: flex; gap: 4px; margin: 11px 0 46px; }
.place-btns button { height: 28px; padding: 0 11px; border: 1px solid #fff; border-radius: 14px; }
.place-btns .round { width: 30px; padding: 0; display: grid; place-items: center; }
.round svg { width: 8px; height: 12px; }
.side nav a { display: block; height: 41px; padding-left: 20px; line-height: 40px; border-bottom: 1px solid #155f78; }
.side nav a.on { background: #1592a0; }
.side nav a:last-child { border: 0; }
.facts { width: 590px; background: #e5e5e5; }
.ids { display: grid; grid-template-columns: 286px 1fr; row-gap: 19px; margin: 0 15px; padding: 26px 0 20px; border-bottom: 1px solid #d5d5d5; line-height: 16px; }
.ids dt { color: #1c769b; }
.ids dd { font-weight: 700; }
.theme { display: flex; align-items: center; gap: 10px; width: 100%; height: 41px; padding: 0 14px 0 44px; border-top: 1px solid #c8c8c8; color: #1c769b; font-weight: 700; text-align: left; }
.theme span { flex: 1; }
.theme.open { background: #d0d0d0; }
.chev { width: 12px; height: 16px; }
.vals { margin: 0 15px; font-size: 13px; }
.vals li { display: grid; grid-template-columns: 337px 1fr; align-items: center; height: 29px; padding-left: 55px; border-bottom: 1px solid #d2d2d2; color: #777; }
.vals li span:first-child { color: #000; }
.vals b { font-size: 16px; color: #000; }
.notes { display: flex; align-items: center; gap: 2px; height: 22px; margin: 29px 17px 0 auto; padding: 0 4px; border: 1px solid #1c769b; color: #1c769b; font-size: 12px; }
.pop { position: relative; flex: 1; padding: 39px 51px 43px 89px; }
.pop h2 { font-size: 22px; line-height: 28px; }
.card { display: grid; grid-template-columns: 322px 1fr; height: 685px; margin-top: 44px; border: 2px solid #ccc; border-top: 3px solid #f7931e; }
.card-l { display: flex; flex-direction: column; }
.stat { padding: 19px 18px 37px; }
.stat h3 { font-size: 14px; line-height: 18px; }
.big { font-size: 20px; font-weight: 700; line-height: 26px; color: #33a5dd; }
.big small { font-size: 14px; }
.stat h4 { margin: 14px 0 18px; font-size: 16px; font-weight: 400; line-height: 22px; }
.rank { margin-bottom: 10px; font-size: 15px; }
.ends { display: flex; justify-content: space-between; font-size: 13px; line-height: 16px; }
.track { position: relative; height: 17px; margin: 0 8px 0 5px; background: linear-gradient(#ccc, #ccc) 0 9px / 100% 2px no-repeat, linear-gradient(90deg, #ccc 2px, transparent 2px) 0 5px / 27px 9px repeat-x; border-right: 2px solid #ccc; }
.mark { position: absolute; top: 3px; width: 6px; height: 14px; background: #f7931e; }
.pos { position: relative; height: 14px; font-size: 13px; line-height: 14px; color: #f7931e; }
.pos span { position: absolute; transform: translateX(-25%); }
.ranking { display: block; margin-top: -2px; color: #33a5dd; text-decoration: underline; }
.stat.alt { display: flex; align-items: center; justify-content: space-between; padding: 19px 8px 19px 18px; border-top: 2px solid #aaa; background: #f7f7f7; }
.stat.alt .chev { margin-top: 14px; color: #999; }
.filler { flex: 1; border: solid #aaa; border-width: 2px 2px 0 0; background: #e5e5e5; }
.card-r { display: flex; flex-direction: column; padding: 17px 30px 0; }
.card-r h3 { font-size: 16px; line-height: 20px; color: #164a69; }
.map-tools { display: flex; justify-content: flex-end; gap: 8px; margin-top: 50px; color: #999; }
.map { width: 100%; height: 429px; }
.map polygon { stroke: #bfe0e6; stroke-width: 2; stroke-linejoin: round; }
.pink { color: #f0197d; }
.legend { margin-top: 4px; font-size: 13px; line-height: 16px; }
.ramp { display: grid; grid-template-columns: repeat(4, 1fr); gap: 3px; margin-top: 6px; line-height: 15px; }
.ramp li { padding-left: 3px; border-top: 6px solid; }
.ramp .c0 { border-image: linear-gradient(#7fcdbb, #7fcdbb) 1; }
.ramp .c1 { border-image: linear-gradient(#41b6c4, #41b6c4) 1; }
.ramp .c2 { border-image: linear-gradient(#2e8bca, #2e8bca) 1; }
.ramp .c3 { border-image: linear-gradient(#1c769b, #1c769b) 1; }
.nodata { display: flex; gap: 10px; margin-top: 10px; }
.nodata i { width: 20px; height: 20px; background: #ccc; }
.sel { display: flex; gap: 7px; margin: 9px 0 0 6px; line-height: 20px; }
.sel svg { width: 10px; height: 15px; }
.vl-float { position: absolute; top: 174px; right: 0; display: grid; place-items: center; width: 38px; height: 38px; border-radius: 10px; background: linear-gradient(90deg, #0077a8, #00509b); color: #fff; }
.vl-float svg { width: 24px; height: 24px; }
.vscroll { display: flex; align-items: flex-end; justify-content: center; width: 17px; background: #f1f1f1; font-size: 9px; color: #505050; }

/* Windows 10 taskbar */
.task { display: flex; height: 40px; background: linear-gradient(90deg, #253531, #1b2c3a 30%, #1e1f22 55%, #1b1c1e 95%, #12262b); color: #fff; font-family: "Open Sans", "Noto Sans", sans-serif; }
.tk { position: relative; display: grid; place-items: center; width: 49px; border: solid transparent; border-width: 0 4px; background: linear-gradient(#76b9ed, #76b9ed) bottom / 100% 2px no-repeat padding-box; }
.tk svg { width: 24px; height: 24px; }
.tk .wi { width: 16px; height: 16px; }
.nolink { background: none; }
.tk.active { border-width: 0 1px 0 0; background-color: #4f585c; }
.rec::after { content: ""; position: absolute; right: 7px; bottom: 6px; width: 9px; height: 9px; border: 1px solid #fff; border-radius: 50%; background: #c50f2e; }
.tray { display: flex; align-items: center; gap: 8px; margin-left: auto; padding-right: 24px; }
.mic { width: 10px; height: 18px; }
.two { font-size: 11px; line-height: 18px; text-align: center; }
.tray .mic { margin-left: 3px; }
.tray .act { margin-left: 9px; }

/* Teams call */
.screen-b { background: #1a1a1a; border-bottom: 3px solid #000; color: #fff; font-family: "Open Sans", "Noto Sans", sans-serif; }
.t-title { display: grid; grid-template-columns: 1fr auto 1fr; align-items: center; height: 49px; background: #0a0a0a; border-bottom: 1px solid #000; color: #777; font-size: 15px; }
.t-title span { grid-column: 2; }
.t-title div { display: flex; align-items: center; justify-content: flex-end; gap: 32px; padding-right: 17px; }
.t-bar { display: flex; align-items: center; height: 75px; padding: 0 26px 0 34px; background: #1f1f1f; }
.thin { fill: none; stroke: #ddd; stroke-width: 1.5px; }
.time { margin-left: 22px; font-size: 15px; }
.ask { width: 187px; height: 40px; margin-left: auto; border: 1px solid #666; border-radius: 4px; background: #2a2a2a; font-size: 15px; font-weight: 600; }
.sep { width: 1px; height: 40px; margin: 0 31px 0 23px; background: #555; }
.t-icons { display: flex; gap: 35px; }
.t-icons + .sep { margin-left: 30px; }
.leave { display: flex; align-items: center; justify-content: center; gap: 10px; width: 115px; height: 40px; margin-left: 34px; border-radius: 4px; background: #c4314b; font-size: 15px; font-weight: 600; }
.stage { flex: 1; display: flex; padding: 6px 0; }
.shared { position: relative; flex: 1; display: flex; flex-direction: column; margin-left: 6px; border: solid #000; border-width: 0 4px 0 3px; background: #fff; }
.people { width: 312px; display: flex; flex-direction: column; align-items: center; justify-content: space-between; margin-top: 170px; padding: 67px 0 48px; background: #1f1f1f; }
.person { display: flex; flex-direction: column; align-items: center; gap: 19px; font-size: 14px; }
.person b { font-weight: 600; }
.face { display: grid; place-items: center; width: 206px; height: 206px; border-radius: 50%; background: #eed2d5; color: #6e2433; font-size: 82px; font-weight: 600; line-height: 88px; }
.me { width: 70px; height: 70px; font-size: 26px; line-height: 30px; }

/* Chrome inside the shared screen */
.mini { font-size: 10px; line-height: 14px; }
.mini .tabs { height: 26px; padding-left: 6px; }
.mini .tab { width: 200px; padding: 0 8px 0 10px; border-radius: 7px 7px 0 0; }
.mini .tab-title { margin-left: 6px; }
.mini .new-tab { width: 38px; }
.mini .win-ctl { gap: 28px; padding: 0 14px 4px 0; }
.mini .toolbar { height: 31px; padding: 0 6px 0 12px; }
.mini .nav-ico { width: 78px; gap: 12px; }
.mini .omnibox { height: 23px; margin-right: 11px; gap: 13px; padding: 0 8px; }
.mini .lock { width: 10px; height: 12px; margin-right: -4px; }
.mini .url { font-size: 11px; }
.starred { fill: #4285f4; color: #4285f4; }
.initial { width: 18px; height: 18px; margin-left: 10px; border-radius: 50%; background: #f4511e; text-align: center; line-height: 18px; }
.mini .more { width: 22px; height: 22px; }
.mini .infobar { height: 38px; gap: 17px; padding-left: 14px; }
.mini .blue-btn, .pop-b .blue-btn { height: 27px; padding: 0 12px; font-size: 10px; }
.pop-b { top: 53px; right: 0; width: 266px; height: 109px; padding: 15px 13px 13px; font-size: 10px; line-height: 16px; }
.pop-b .x { top: 9px; right: 8px; }
.pop-b h5 { font-size: 12px; line-height: 18px; margin-bottom: 7px; }
.pop-b .blue-btn { margin-top: auto; }

/* Correios */
.cor-head { display: flex; align-items: center; height: 40px; padding-left: 13px; background: linear-gradient(#ccc, #f5f3f0 4px); border-bottom: 2px solid #f3e48e; }
.cor-mark { width: 28px; height: 24px; margin-left: 17px; }
.cor-head span { margin: 4px 0 0 3px; font-size: 18px; font-weight: 600; color: #00416b; }
.cor-body { flex: 1; display: flex; font-size: 12px; line-height: 16px; color: #333; }
.cor-side { width: 199px; background: #f6f3f0; }
.cor-side h6 { padding: 14px 14px 13px; border-bottom: 1px solid #ccc; font-size: 12px; color: #000; }
.cor-side nav { display: flex; flex-direction: column; gap: 13px; padding: 17px 13px; color: #1b75a5; white-space: nowrap; }
.more-link { display: flex; align-items: center; justify-content: space-between; }
.cor-main { flex: 1; display: flex; flex-direction: column; }
.trail { padding: 13px 14px 0; color: #56567a; }
.trail b { font-size: 13px; font-weight: 600; }
.trail .gt { color: #222; }
.trail a, .pager a { color: #1b75a5; }
.frame { flex: 1; display: flex; align-self: center; width: 627px; margin-top: 26px; }
.result { flex: 1; padding: 5px 6px 0 0; }
.result h3 { font-size: 16px; font-weight: 600; line-height: 20px; color: #00416b; white-space: nowrap; }
table { border-collapse: collapse; table-layout: fixed; width: 100%; text-align: left; }
th, td { padding: 0 0 0 8px; white-space: nowrap; }
th { background: #0071b0; color: #fff; font-weight: 400; }
.uf { width: 435px; margin-top: 13px; }
.uf th { height: 29px; }
.uf td { height: 28px; }
.uf th:first-child { width: 76px; }
.pager { display: flex; justify-content: center; gap: 20px; margin: 7px 0 4px; color: #56567a; }
.pager a { text-decoration: underline; }
.list { width: 608px; font-size: 10px; line-height: 14px; }
.list th { height: 38px; }
.list th:nth-child(1) { width: 139px; }
.list th:nth-child(2) { width: 137px; }
.list th:nth-child(3) { width: 182px; }
.list td { height: 24px; border-bottom: 1px solid #e0e0e0; }
.list tr:last-child td { border: 0; }
.bar { display: flex; flex-direction: column; align-items: center; background: #f1f1f1; font-size: 7px; line-height: 14px; color: #777; }
.bar i { flex: 1; width: 100%; background: #c1c1c1; }
.inner { width: 13px; }
.outer { width: 12px; justify-content: space-between; }
.outer i { flex: none; width: 10px; height: 495px; }

/* Windows 11 taskbar */
.task11 { display: grid; grid-template-columns: 1fr auto 1fr; align-items: center; height: 37px; background: linear-gradient(90deg, #12343a, #14264a 20%, #1c1d2c 40%, #1f1f22 80%, #12303c); }
.dock { grid-column: 2; display: flex; gap: 4px; }
.dock span { position: relative; display: grid; place-items: center; width: 33px; height: 33px; border-radius: 4px; background: radial-gradient(#aaa 2px, transparent 2px) center 15px no-repeat; }
.dock svg { width: 21px; height: 21px; }
.dock .plain { background: none; }
.dock .plain svg { width: 18px; height: 18px; }
.dock .cur { background: #30343b; }
.dock .alert { background: #5a2522; }
.dock em { position: absolute; top: 1px; right: 1px; width: 10px; height: 10px; border-radius: 50%; background: #c50f2e; font: 8px/10px "Open Sans", sans-serif; text-align: center; }
.tray11 { display: flex; align-items: center; justify-content: flex-end; gap: 7px; padding-right: 16px; }
.tray11 .mic { height: 14px; margin: 0 16px 0 8px; color: #5fb3c4; }
.tray11 .two { font-size: 9px; line-height: 13px; }
.tray11 .date { margin-left: 5px; text-align: right; }
.tray11 em { width: 14px; height: 14px; border-radius: 50%; background: #4cc2ff; color: #000; font: 9px/14px "Open Sans", sans-serif; text-align: center; }
.who { position: absolute; left: 7px; bottom: 10px; padding: 6px; border-radius: 4px; background: rgba(30,40,38,.65); font-size: 15px; }

.big-task { height: 50px; }
.big-task .tk { width: 62px; border-width: 0 5px; background-size: 100% 3px; }
.big-task .tk svg { width: 30px; height: 30px; }
.big-task .tk .wi { width: 20px; height: 20px; }
.big-task .tk.active { border-width: 0 1px; }
.big-task .tray { padding-right: 9px; }
.big-task .two { font-size: 14px; line-height: 24px; }
```
